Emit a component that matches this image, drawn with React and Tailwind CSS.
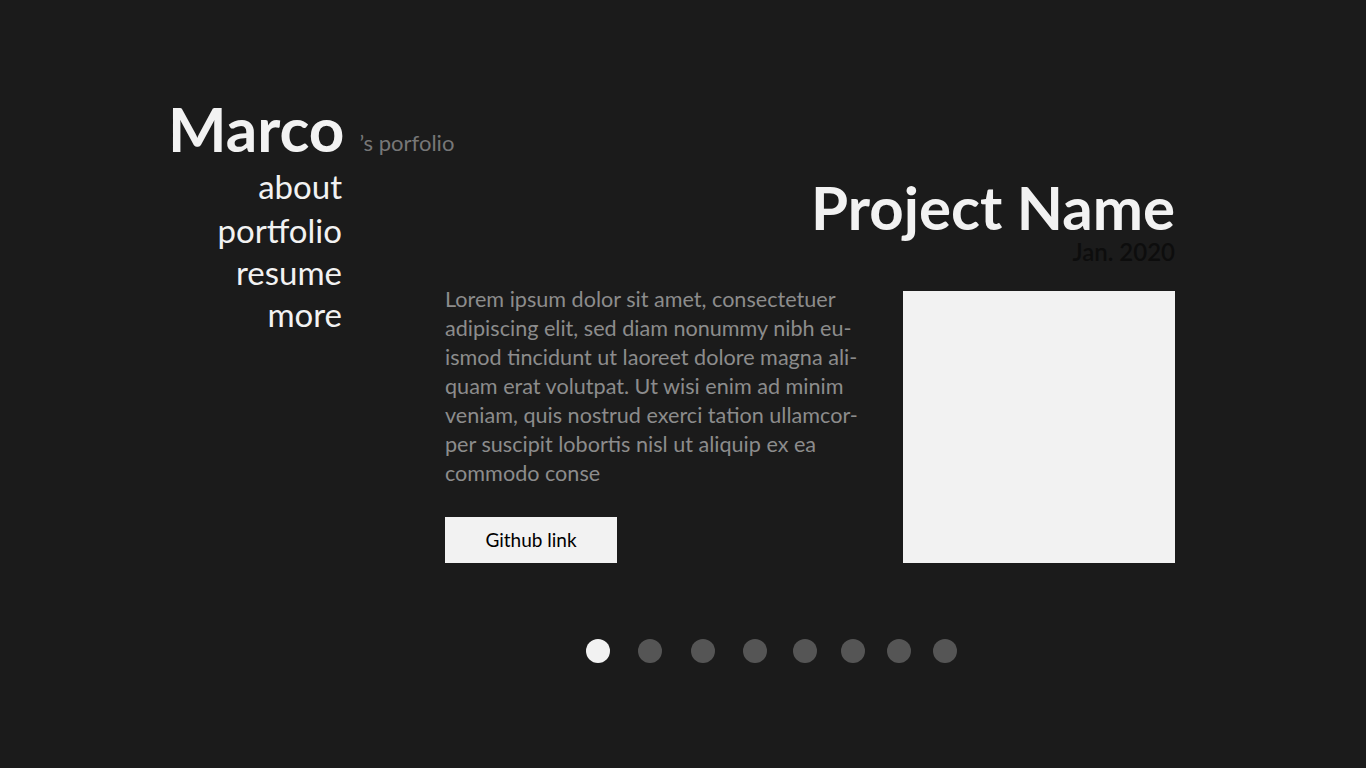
import React from 'react';

const navItems = ['about', 'portfolio', 'resume', 'more'];

const bodyLines = [
  'Lorem ipsum dolor sit amet, consectetuer',
  'adipiscing elit, sed diam nonummy nibh eu-',
  'ismod tincidunt ut laoreet dolore magna ali-',
  'quam erat volutpat. Ut wisi enim ad minim',
  'veniam, quis nostrud exerci tation ullamcor-',
  'per suscipit lobortis nisl ut aliquip ex ea',
  'commodo conse',
];

// spacing between the dots isn't even in the mockup, keep it as drawn
const dotGaps = ['ml-0', 'ml-[28px]', 'ml-[29px]', 'ml-[28px]', 'ml-[26px]', 'ml-[24px]', 'ml-[22px]', 'ml-[22px]'];

const App = () => {
  return (
    <div className="w-full h-[768px] bg-[#1b1b1b] font-['Lato',sans-serif] overflow-hidden">
      <div className="flex pl-[168px] pt-[97px]">
        {/* left: name + nav */}
        <div className="w-[174px] shrink-0">
          <div className="flex items-baseline whitespace-nowrap">
            <h1 className="text-[62px] leading-none font-bold text-[#f2f2f2]">Marco</h1>
            <span className="ml-[15px] text-[22px] text-[#777777] relative -top-[1px]">’s porfolio</span>
          </div>
          <nav className="mt-[5px] flex flex-col items-end">
            {navItems.map((item, i) => (
              <a
                key={item}
                href="#"
                className={`text-[33px] leading-[42px] text-[#f2f2f2] ${i === 1 ? 'mt-[2px]' : ''}`}
              >
                {item}
              </a>
            ))}
          </nav>
        </div>

        {/* right: project */}
        <div className="ml-[103px] w-[730px] pt-[80px]">
          <div className="text-right">
            <h2 className="text-[60px] leading-none font-bold text-[#f2f2f2]">Project Name</h2>
            <p className="mt-[3px] text-[24px] leading-none font-semibold text-[#0d0d0d]">Jan. 2020</p>
          </div>

          <div className="mt-[21px] flex justify-between">
            <div>
              <p className="text-[21.6px] leading-[29px] text-[#8c8c8c] whitespace-nowrap">
                {bodyLines.map((line, i) => (
                  <span key={i} className="block">{line}</span>
                ))}
              </p>
              <button className="mt-[29px] w-[172px] h-[46px] bg-[#f2f2f2] text-[19px] text-black">
                Github link
              </button>
            </div>
            <div className="mt-[6px] w-[272px] h-[272px] bg-[#f2f2f2]" />
          </div>

          <div className="mt-[76px] ml-[141px] flex">
            {dotGaps.map((gap, i) => (
              <span
                key={i}
                className={`${gap} w-6 h-6 rounded-full ${i === 0 ? 'bg-[#f2f2f2]' : 'bg-[#555555]'}`}
              />
            ))}
          </div>
        </div>
      </div>
    </div>
  );
};

export default App;
